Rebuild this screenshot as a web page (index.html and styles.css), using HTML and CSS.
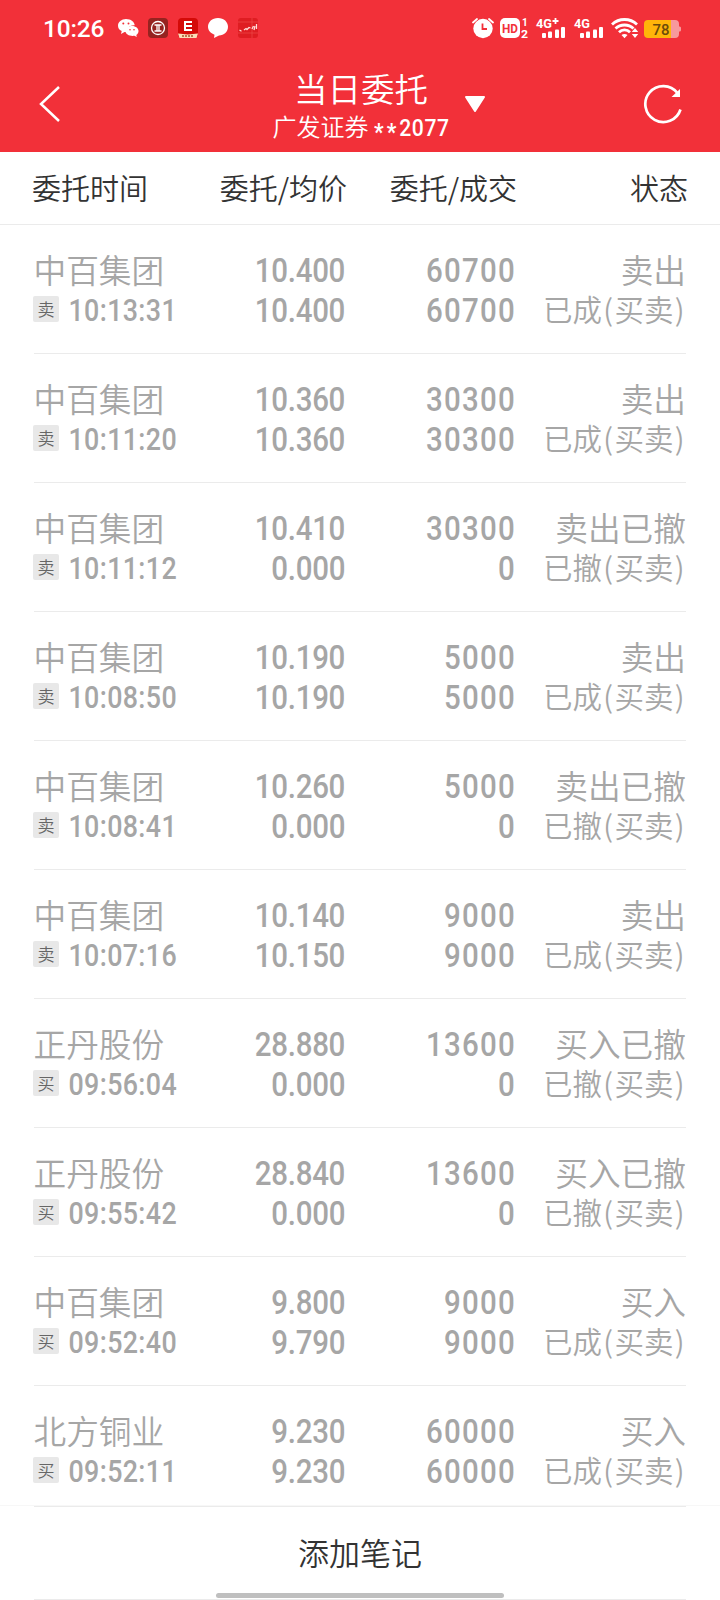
FILE: index.html
```
<!DOCTYPE html>
<html lang="zh-CN">
<head>
<meta charset="utf-8">
<title>当日委托</title>
<link rel="stylesheet" href="styles.css">
</head>
<body>
<div class="page">
  <div class="top">
    <div class="statusbar">
      <span class="clock">10:26</span>
      <svg class="apps" width="142" height="22" viewBox="0 0 142 22">
        <!-- wechat -->
        <path fill="#fff" d="M9 2c5 0 8.500 3 8.700 6.300C13 8 9.500 11 10 15.300L7.500 15 4 17l.7-3C2 12.800 1 11 1 8.500 1 5 4.500 2 9 2z"/>
        <path fill="#fff" d="M15 9c4 0 6.500 2.500 6.500 5 0 1.700-.8 3-2.200 4l.5 2-2.400-1.200C13 19.500 8.500 17.500 8.500 14 8.500 11.300 11.300 9 15 9z"/>
        <g fill="#f23039"><circle cx="6.300" cy="6.500" r="1"/><circle cx="11.500" cy="6.500" r="1"/><circle cx="13" cy="12.700" r=".8"/><circle cx="17" cy="12.700" r=".8"/></g>
        <!-- bank -->
        <rect x="31" y="1" width="20" height="20" rx="4" fill="#962320"/>
        <circle cx="41" cy="11" r="6.500" fill="none" stroke="#fff" stroke-width="1.300"/>
        <path fill="none" stroke="#fff" stroke-width="1.300" d="M37.500 8h7M37.500 14h7M40 8v6M42 8v6"/>
        <!-- broker -->
        <rect x="61" y="1" width="20" height="20" rx="4" fill="#d40a08"/>
        <path fill="none" stroke="#fff" stroke-width="2" d="M67 5h8M68 9h7M67 13h8M68 4v10"/>
        <path fill="#fbdcb8" d="M61 16.500l10 1 10-1-1.500 4.500h-17z"/>
        <path stroke="#a8542e" stroke-width="1.300" stroke-dasharray="2 1" d="M65 19h12"/>
        <!-- message -->
        <path fill="#fff" d="M101 1c6 0 10 4 10 8.800 0 5-4 8.700-9 8.700l-5 2.500.5-3.300C93.500 16 91 13.500 91 9.800 91 5 95 1 101 1z"/>
        <!-- market -->
        <rect x="121" y="1" width="20" height="20" rx="3" fill="#df1d22"/>
        <path stroke="#ee4a48" stroke-width=".7" d="M121 5h20M121 16h20M135 1v20"/>
        <path fill="none" stroke="#ffdcd8" stroke-width="1.300" d="M122.500 13l2 1.200M127 13l2-1.500 1 1 2-2 1.500.5M135 12l1.500-3M137 13l1-4M139.500 12V7"/>
      </svg>
      <svg class="signals" width="212" height="26" viewBox="0 -2 212 26">
        <!-- alarm -->
        <g transform="translate(0 1)">
          <circle cx="11" cy="10.500" r="9.700" fill="#fff"/>
          <path fill="none" stroke="#f23039" stroke-width="1" d="M0 6.500L6.500 1M15.500 1L22 6.500"/>
          <path fill="none" stroke="#fff" stroke-width="1.800" stroke-linecap="round" d="M1 4.500L5 1M17 1l4 3.500"/>
          <path fill="none" stroke="#f23039" stroke-width="1.800" d="M10.500 5.500V11H15"/>
        </g>
        <!-- hd -->
        <rect x="28" y="1" width="20" height="20" rx="5" fill="#fff"/>
        <text class="hd" x="30" y="15.800" textLength="16" lengthAdjust="spacingAndGlyphs">HD</text>
        <text class="sim" x="50" y="9">1</text>
        <text class="sim" x="49" y="21" textLength="7" lengthAdjust="spacingAndGlyphs">2</text>
        <!-- mobile signals -->
        <text class="net" x="64" y="10.500" textLength="16" lengthAdjust="spacingAndGlyphs">4G</text>
        <path stroke="#fff" stroke-width="1.800" d="M80.500 4h6M83.500 1v6"/>
        <g fill="#fff"><rect x="70" y="16" width="4" height="5" rx="1"/><rect x="76" y="14.500" width="4" height="6.500" rx="1"/><rect x="83" y="12.500" width="4" height="8.500" rx="1"/><rect x="89" y="10" width="4" height="11" rx="1"/></g>
        <text class="net" x="102" y="10.500" textLength="16" lengthAdjust="spacingAndGlyphs">4G</text>
        <g fill="#fff"><rect x="108" y="16" width="4" height="5" rx="1"/><rect x="114" y="14.500" width="4" height="6.500" rx="1"/><rect x="121" y="12.500" width="4" height="8.500" rx="1"/><rect x="127" y="10" width="4" height="11" rx="1"/></g>
        <!-- wifi -->
        <g fill="none" stroke="#fff" stroke-width="2.800">
          <path d="M140 7.500C147 .8 158 .8 165 7.500"/>
          <path d="M143.500 11.500C148.500 6.800 156.500 6.800 161.500 11.500"/>
          <path d="M147 15.200C150 12.200 155 12.200 158 15.200"/>
        </g>
        <path fill="#fff" d="M149.500 18c1.800-1.500 4.200-1.500 6 0l-3 3.200z"/>
        <path fill="#fff" d="M163 11l3.200 4h-6.400zM163 21l3.200-4h-6.400z"/>
        <!-- battery -->
        <path fill="#f7999c" d="M177 3h26a4 4 0 0 1 4 4v2.500c1.500 0 2 .5 2 1.500v2c0 1-.5 1.500-2 1.500V17a4 4 0 0 1-4 4h-26z"/>
        <path fill="#ffb50a" d="M176 3h23v18h-23a4 4 0 0 1-4-4V7a4 4 0 0 1 4-4z"/>
        <text class="bat" x="180.500" y="17.500" textLength="17" lengthAdjust="spacingAndGlyphs">78</text>
      </svg>
    </div>
    <div class="navbar">
      <svg class="back" width="22" height="38" viewBox="0 0 22 38"><path fill="none" stroke="#fff" stroke-width="2.500" d="M20 2L2 19l18 17"/></svg>
      <div class="account">
        <div class="title">当日委托</div>
        <div class="sub">广发证券 <span class="acct"><span class="mask">**</span>2077</span></div>
      </div>
      <svg class="arrow" width="22" height="18" viewBox="0 0 22 18"><path fill="#fff" stroke="#fff" stroke-width="2" stroke-linejoin="round" d="M2 2h18l-9 14z"/></svg>
      <svg class="refresh" width="40" height="40" viewBox="0 0 40 40">
        <path fill="none" stroke="#fff" stroke-width="2.700" d="M37.500 25.500A18 18 0 1 1 34.500 9"/>
        <path fill="#fff" d="M37 5v8h-8.500z"/>
      </svg>
    </div>
  </div>

  <div class="head">
    <span>委托时间</span><span>委托/均价</span><span>委托/成交</span><span>状态</span>
  </div>

  <div class="list">
    <div class="row">
      <div class="stock"><div class="name">中百集团</div><div class="time"><i>卖</i><b>10:13:31</b></div></div>
      <div class="num price">10.400<br>10.400</div>
      <div class="num">60700<br>60700</div>
      <div class="state"><div>卖出</div><div class="deal">已成<s>(</s>买卖<s>)</s></div></div>
    </div>
    <div class="row">
      <div class="stock"><div class="name">中百集团</div><div class="time"><i>卖</i><b>10:11:20</b></div></div>
      <div class="num price">10.360<br>10.360</div>
      <div class="num">30300<br>30300</div>
      <div class="state"><div>卖出</div><div class="deal">已成<s>(</s>买卖<s>)</s></div></div>
    </div>
    <div class="row">
      <div class="stock"><div class="name">中百集团</div><div class="time"><i>卖</i><b>10:11:12</b></div></div>
      <div class="num price">10.410<br>0.000</div>
      <div class="num">30300<br>0</div>
      <div class="state"><div>卖出已撤</div><div class="deal">已撤<s>(</s>买卖<s>)</s></div></div>
    </div>
    <div class="row">
      <div class="stock"><div class="name">中百集团</div><div class="time"><i>卖</i><b>10:08:50</b></div></div>
      <div class="num price">10.190<br>10.190</div>
      <div class="num">5000<br>5000</div>
      <div class="state"><div>卖出</div><div class="deal">已成<s>(</s>买卖<s>)</s></div></div>
    </div>
    <div class="row">
      <div class="stock"><div class="name">中百集团</div><div class="time"><i>卖</i><b>10:08:41</b></div></div>
      <div class="num price">10.260<br>0.000</div>
      <div class="num">5000<br>0</div>
      <div class="state"><div>卖出已撤</div><div class="deal">已撤<s>(</s>买卖<s>)</s></div></div>
    </div>
    <div class="row">
      <div class="stock"><div class="name">中百集团</div><div class="time"><i>卖</i><b>10:07:16</b></div></div>
      <div class="num price">10.140<br>10.150</div>
      <div class="num">9000<br>9000</div>
      <div class="state"><div>卖出</div><div class="deal">已成<s>(</s>买卖<s>)</s></div></div>
    </div>
    <div class="row">
      <div class="stock"><div class="name">正丹股份</div><div class="time"><i>买</i><b>09:56:04</b></div></div>
      <div class="num price">28.880<br>0.000</div>
      <div class="num">13600<br>0</div>
      <div class="state"><div>买入已撤</div><div class="deal">已撤<s>(</s>买卖<s>)</s></div></div>
    </div>
    <div class="row">
      <div class="stock"><div class="name">正丹股份</div><div class="time"><i>买</i><b>09:55:42</b></div></div>
      <div class="num price">28.840<br>0.000</div>
      <div class="num">13600<br>0</div>
      <div class="state"><div>买入已撤</div><div class="deal">已撤<s>(</s>买卖<s>)</s></div></div>
    </div>
    <div class="row">
      <div class="stock"><div class="name">中百集团</div><div class="time"><i>买</i><b>09:52:40</b></div></div>
      <div class="num price">9.800<br>9.790</div>
      <div class="num">9000<br>9000</div>
      <div class="state"><div>买入</div><div class="deal">已成<s>(</s>买卖<s>)</s></div></div>
    </div>
    <div class="row">
      <div class="stock"><div class="name">北方铜业</div><div class="time"><i>买</i><b>09:52:11</b></div></div>
      <div class="num price">9.230<br>9.230</div>
      <div class="num">60000<br>60000</div>
      <div class="state"><div>买入</div><div class="deal">已成<s>(</s>买卖<s>)</s></div></div>
    </div>
  </div>

  <div class="footer">
    <div class="note">添加笔记</div>
    <div class="homebar"></div>
    <div class="nextline"></div>
  </div>
</div>
</body>
</html>
```
FILE: styles.css
```
* {
    box-sizing: border-box;
}
body {
    margin: 0;
    background: #fff;
    font-family: "Noto Sans CJK SC", sans-serif;
    font-weight: 350;
}
.page {
    width: 720px;
    height: 1600px;
    display: flex;
    flex-direction: column;
    overflow: hidden;
}
svg {
    display: block;
    flex: none;
}
.top {
    height: 152px;
    background: #f23039;
    color: #fff;
    flex: none;
}
.statusbar {
    height: 56px;
    padding: 0 36px 0 43px;
    display: flex;
    align-items: center;
}
.clock {
    width: 74px;
    padding-top: 2px;
    font: 500 24.5px/54px Roboto, sans-serif;
    letter-spacing: -0.2px;
}
.signals {
    margin-left: auto;
}
.signals text {
    font-family: Roboto, sans-serif;
    font-weight: 700;
    fill: #fff;
}
.signals .hd {
    font-size: 13.5px;
    fill: #f23039;
}
.signals .sim {
    font-size: 10px;
}
.signals .net {
    font-size: 13.5px;
}
.signals .bat {
    font-size: 15px;
    font-weight: 500;
    fill: #6b4b0a;
}
.navbar {
    height: 96px;
    padding: 0 37px 0 39px;
    display: flex;
    align-items: center;
}
.account {
    width: 180px;
    margin-left: 210px;
    text-align: center;
    white-space: nowrap;
}
.title {
    font-size: 33.5px;
    line-height: 44px;
    padding-top: 2px;
}
.sub {
    font-size: 24px;
    line-height: 32px;
    height: 35px;
}
.acct {
    display: inline-block;
    height: 32px;
    font-family: Roboto, sans-serif;
    font-weight: 500;
    letter-spacing: 0.6px;
    transform: scaleX(0.88);
    transform-origin: left;
    margin-right: -10px;
}
.mask {
    vertical-align: -4px;
    font-weight: 700;
    line-height: 20px;
    letter-spacing: 3.5px;
}
.arrow {
    margin-left: 13px;
}
.refresh {
    margin-left: auto;
}
.head,
.row {
    display: grid;
    text-align: right;
    flex: none;
}
.head {
    height: 73px;
    padding: 0 32px;
    grid-template-columns: 160px 155px 170px 1fr;
    border-bottom: 1px solid #ebebeb;
    font-size: 29px;
    line-height: 71px;
    color: #333;
}
.head span:first-child {
    text-align: left;
}
.list {
    height: 1280px;
    flex: none;
    overflow: hidden;
    color: #a6a6a6;
}
.row {
    height: 129px;
    margin: 0 34px;
    padding-top: 24px;
    grid-template-columns: 160px 152px 170px 1fr;
    border-bottom: 1px solid #ebebeb;
    font-size: 32.7px;
    line-height: 40px;
}
.stock {
    text-align: left;
    white-space: nowrap;
}
.name {
    margin-left: -0.5px;
}
.time {
    display: flex;
    align-items: center;
    height: 40px;
    margin-left: -1px;
}
.time i {
    width: 26px;
    height: 26px;
    border-radius: 2px;
    background: #e8e8e8;
    color: #666;
    font-size: 17px;
    font-style: normal;
    line-height: 26px;
    text-align: center;
}
.time b {
    width: 118px;
    padding-top: 3px;
    font: 500 30.5px/40px Roboto, sans-serif;
    letter-spacing: 0.4px;
    display: flex;
    justify-content: flex-end;
    transform: scaleX(0.88);
    transform-origin: right;
}
/* narrow digits with open spacing */
.num {
    padding-top: 2px;
    font-family: Roboto, sans-serif;
    font-weight: 500;
    font-size: 33.5px;
    letter-spacing: 1.4px;
    transform: scaleX(0.88);
    transform-origin: right;
}
.price {
    padding-right: 1px;
    letter-spacing: -0.3px;
}
.state {
    white-space: nowrap;
}
.deal {
    display: flex;
    justify-content: flex-end;
    font-size: 29.5px;
    line-height: 38px;
}
.deal s {
    width: 12.5px;
    text-align: center;
    text-decoration: none;
}
.footer {
    height: 95px;
    flex: none;
    border-top: 1px solid #f7f7f7;
}
.note {
    height: 87px;
    margin: 0 34px;
    border-top: 1px solid #ebebeb;
    text-align: center;
    font-size: 31px;
    line-height: 90px;
    color: #333;
}
.homebar {
    width: 288px;
    height: 5px;
    margin: 0 auto;
    border-radius: 3px;
    background: #bfbfbf;
}
.nextline {
    height: 1px;
    margin: 1px 34px 0;
    background: #ebebeb;
}
```
